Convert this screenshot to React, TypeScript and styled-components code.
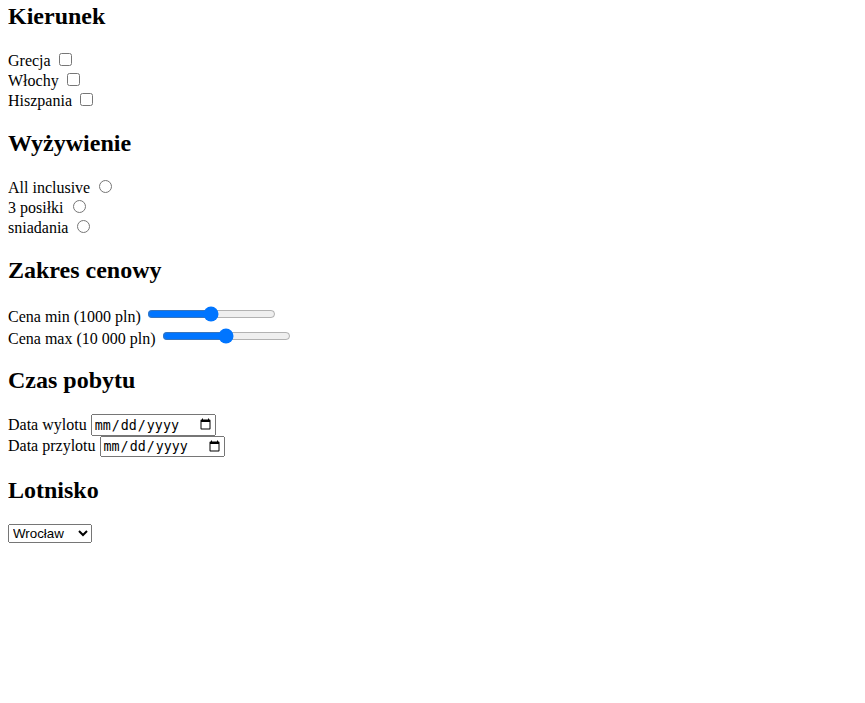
import React from "react";
import styled, { createGlobalStyle } from "styled-components";

const Global = createGlobalStyle`
  body {
    margin: 0 8px 8px 8px;
    font-family: "Liberation Serif", "Times New Roman", serif;
    font-size: 16px;
    color: #000;
    background: #fff;
  }
`;

const Form = styled.form`
  display: block;
  padding-top: 3px;
`;

const Heading = styled.h2<{ $first?: boolean }>`
  font-family: "Liberation Serif", "Times New Roman", serif;
  font-size: 24px;
  font-weight: bold;
  margin: ${(p) => (p.$first ? "0" : "19.92px")} 0 19.92px 0;
`;

const Label = styled.label`
  font-family: "Liberation Serif", "Times New Roman", serif;
  font-size: 16px;
`;

const DateInput = styled.input`
  font-family: "DejaVu Sans Mono", "Liberation Mono", monospace;
  font-size: 13.33px;
`;

const Select = styled.select`
  font-family: "Liberation Sans", Arial, sans-serif;
  font-size: 13.33px;
`;

export default function App() {
  return (
    <>
      <Global />
      <Form>
        <Heading $first>Kierunek</Heading>
        <Label>Grecja <input type="checkbox" /></Label>
        <br />
        <Label>Włochy <input type="checkbox" /></Label>
        <br />
        <Label>Hiszpania <input type="checkbox" /></Label>

        <Heading>Wyżywienie</Heading>
        <Label>All inclusive <input type="radio" name="food" /></Label>
        <br />
        <Label>3 posiłki <input type="radio" name="food" /></Label>
        <br />
        <Label>sniadania <input type="radio" name="food" /></Label>

        <Heading>Zakres cenowy</Heading>
        <Label>Cena min (1000 pln) <input type="range" /></Label>
        <br />
        <Label>Cena max (10 000 pln) <input type="range" /></Label>

        <Heading>Czas pobytu</Heading>
        <Label>Data wylotu <DateInput type="date" /></Label>
        <br />
        <Label>Data przylotu <DateInput type="date" /></Label>

        <Heading>Lotnisko</Heading>
        <Select defaultValue="wroclaw">
          <option value="wroclaw">Wrocław</option>
          <option value="warszawa">Warszawa</option>
          <option value="krakow">Kraków</option>
        </Select>
      </Form>
    </>
  );
}
